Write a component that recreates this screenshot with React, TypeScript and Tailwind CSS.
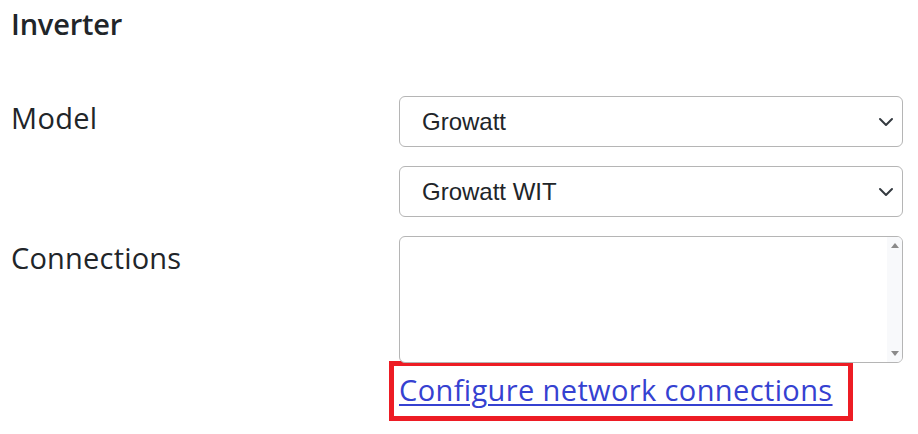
import { useState } from 'react'

const Chevron = () => (
  <svg
    className="pointer-events-none absolute right-[9px] top-1/2 h-4 w-4 -translate-y-1/2"
    viewBox="0 0 16 16"
    fill="none"
    stroke="#343a40"
    strokeWidth="2"
    strokeLinecap="round"
    strokeLinejoin="round"
  >
    <path d="M2 5l6 6 6-6" />
  </svg>
)

const Select = ({ value, options }: { value: string; options: string[] }) => {
  const [current, setCurrent] = useState(value)
  return (
    <div className="relative">
      <select
        value={current}
        onChange={(e) => setCurrent(e.target.value)}
        className="block h-[51px] w-full appearance-none rounded-[6px] border border-[#b5b5b5] bg-white pl-[22px] pr-[40px] text-[24px] text-[#212529] outline-none"
        style={{ fontFamily: '"Liberation Sans", Arial, sans-serif' }}
      >
        {options.map((o) => (
          <option key={o} value={o}>
            {o}
          </option>
        ))}
      </select>
      <Chevron />
    </div>
  )
}

export default function App() {
  return (
    <div
      className="min-h-[434px] bg-white pl-[11px] pr-[15px] text-[#212529]"
      style={{ fontFamily: '"Open Sans", "Noto Sans", sans-serif' }}
    >
      <h2 className="pt-[9px] text-[29px] font-semibold leading-[30px] tracking-[-0.2px]">Inverter</h2>

      <div className="mt-[57px] grid grid-cols-[388px_504px] gap-y-[19px]">
        {/* Model */}
        <div className="pt-[4px] text-[29px] leading-[36px] tracking-[0.3px]">Model</div>
        <div className="flex flex-col gap-[19px]">
          <Select value="Growatt" options={['Growatt', 'Huawei', 'SMA', 'Fronius']} />
          <Select value="Growatt WIT" options={['Growatt WIT', 'Growatt MOD', 'Growatt SPH']} />
        </div>

        {/* Connections */}
        <div className="pt-[4px] text-[29px] leading-[36px] tracking-[0.2px]">Connections</div>
        <div>
          <div className="relative">
            <textarea
              className="block h-[127px] w-full resize-none overflow-hidden rounded-[6px] border border-[#b5b5b5] bg-white outline-none"
              readOnly
            />
            {/* scrollbar */}
            <div className="pointer-events-none absolute bottom-[1px] right-[1px] top-[1px] flex w-[15px] flex-col items-center justify-between rounded-r-[5px] bg-[#f8f9fb] py-[6px]">
              <span className="h-0 w-0 border-x-[4px] border-b-[5px] border-x-transparent border-b-[#8a8a8a]" />
              <span className="h-0 w-0 border-x-[4px] border-t-[5px] border-x-transparent border-t-[#8a8a8a]" />
            </div>
          </div>
          <div className="-ml-[10px] -mt-[2px] w-fit border-[5px] border-[#ed1c24] pl-[5px] pr-[15px] pt-[3px] leading-[41px]">
            <a
              href="#"
              className="text-[29px] tracking-[0.38px] text-[#3541d1] underline decoration-[2px] underline-offset-[3px]"
            >
              Configure network connections
            </a>
          </div>
        </div>
      </div>
    </div>
  )
}
